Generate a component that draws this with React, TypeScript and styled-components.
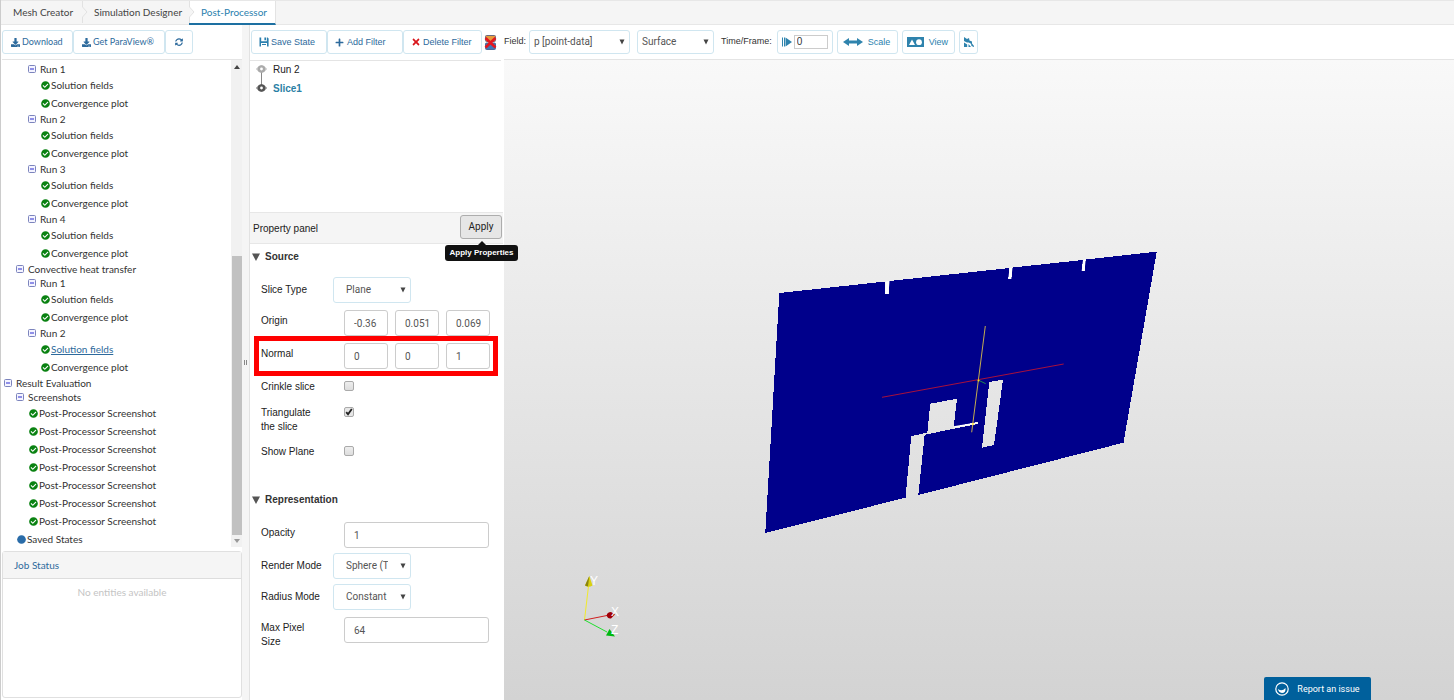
import React from "react";
import styled, { createGlobalStyle, css } from "styled-components";
import { FaCheckCircle, FaCircle, FaDownload, FaSyncAlt, FaTimes, FaPlus } from "react-icons/fa";

const sans = `"Liberation Sans", Arial, sans-serif`;
const lato = `Lato, "Open Sans", sans-serif`;
const roboto = `Roboto, Arial, sans-serif`;

const GlobalStyle = createGlobalStyle`
  * { box-sizing: border-box; }
  body { margin: 0; background: #f5f5f5; color: #333; font: 10px/14px ${sans}; }
  button, input, select { font: inherit; color: inherit; margin: 0; }
  ul { list-style: none; margin: 0; padding: 0; }
`;

const Page = styled.div`
  display: flex;
  flex-direction: column;
  height: 100vh;
  min-height: 700px;
  border-left: 1px solid #ccc;
  overflow: hidden;
`;

const Tabs = styled.nav`
  display: flex;
  flex: none;
  height: 25px;
  border-top: 1px solid #e7e7e7;
  border-bottom: 1px solid #e7e7e7;
  background: #f5f5f5;
  font: 10px/23px ${lato};
`;

const Tab = styled.a<{ $w: number; $active?: boolean }>`
  flex: none;
  width: ${(p) => p.$w}px;
  padding-left: 12px;
  color: #444;
  text-decoration: none;
  white-space: nowrap;
  ${(p) =>
    p.$active &&
    css`
      height: 24px;
      background: #fff;
      color: #2a7fae;
      border-bottom: 2px solid #1d70a2;
      border-right: 1px solid #e3e3e3;
    `}
`;

const Chevron = styled.svg`
  position: relative;
  z-index: 1;
  flex: none;
  width: 6px;
  height: 22px;
  margin-right: -6px;
`;

const Body = styled.div`
  display: flex;
  flex: 1;
  min-height: 0;
`;

const Sidebar = styled.aside`
  display: flex;
  flex-direction: column;
  flex: none;
  width: 241px;
  background: #fff;
  padding-left: 1px;
  font-family: ${lato};
`;

const SideTools = styled.div`
  display: flex;
  height: 35px;
  padding-top: 5px;
  border-bottom: 1px solid #e4e4e4;
`;

const Button = styled.button<{ $w: number; $accent?: string; $gap?: number; $pad?: number }>`
  display: flex;
  align-items: center;
  gap: ${(p) => p.$gap ?? 3}px;
  flex: none;
  width: ${(p) => p.$w}px;
  height: 24px;
  padding: 0 0 0 ${(p) => p.$pad ?? 7}px;
  border: 1px solid #d0e6f0;
  border-radius: 3px;
  background: #fff;
  color: ${(p) => p.$accent ?? "#2d6a9c"};
  font-size: 9px;
  white-space: nowrap;
`;

const TreeWrap = styled.div`
  display: flex;
  flex: none;
  height: 487px;
`;

const Tree = styled.ul`
  flex: 1;
  padding-top: 2px;
`;

const Node = styled.li<{ $level: number; $leaf?: boolean }>`
  display: flex;
  align-items: center;
  height: ${(p) => (p.$leaf ? 18 : 14)}px;
  padding-left: ${(p) => (p.$leaf ? 3 : 2) + p.$level * 12}px;
  gap: ${(p) => (p.$leaf ? 1 : 4)}px;
  color: #333;
  white-space: nowrap;
`;

const NodeLink = styled.a<{ $active?: boolean }>`
  color: ${(p) => (p.$active ? "#2d6a9c" : "#333")};
  text-decoration: ${(p) => (p.$active ? "underline" : "none")};
`;

const Toggle = styled.button`
  display: flex;
  width: 8px;
  height: 8px;
  padding: 0;
  border: 0;
  background: none;
`;

const Scroller = styled.div`
  display: flex;
  flex-direction: column;
  align-items: center;
  width: 11px;
  padding: 5px 0 4px;
  background: #f1f1f1;
`;

const Thumb = styled.div`
  width: 10px;
  height: 279px;
  margin: auto 0 4px;
  background: #c1c1c1;
`;

const JobPanel = styled.section`
  flex: 1;
  margin: 4px 0 2px;
  border: 1px solid #e0e0e0;
  border-radius: 3px;
  text-align: center;
  color: #c4c4c4;
`;

const JobTitle = styled.h2`
  margin: 0 0 6px;
  padding: 0 11px;
  height: 27px;
  border-bottom: 1px solid #ddd;
  background: #f5f5f5;
  color: #2d6a9c;
  font: 10px/26px ${lato};
  text-align: left;
`;

const Splitter = styled.div`
  display: flex;
  align-items: center;
  justify-content: center;
  flex: none;
  width: 8px;
  border-right: 1px solid #e2e2e2;
  background: #f5f5f5;
`;

const Grip = styled.div`
  width: 3px;
  height: 5px;
  border: solid #888;
  border-width: 0 1px;
`;

const Main = styled.main`
  display: flex;
  flex-direction: column;
  flex: 1;
  min-width: 0;
  background: #fff;
`;

const Toolbar = styled.div`
  display: flex;
  align-items: flex-start;
  flex: none;
  height: 34px;
  padding: 5px 0 0 1px;
`;

const ToolGroup = styled.div<{ $gap: number; $left: number }>`
  display: flex;
  align-items: center;
  height: 24px;
  gap: ${(p) => p.$gap}px;
  margin-left: ${(p) => p.$left}px;
`;

const ToolLabel = styled.label`
  height: 24px;
  font-size: 9px;
  line-height: 22px;
`;

const SelectBox = styled.span<{ $w: number; $tall?: boolean }>`
  position: relative;
  display: flex;
  flex: none;
  width: ${(p) => p.$w}px;
  height: ${(p) => (p.$tall ? 26 : 24)}px;

  select {
    width: 100%;
    appearance: none;
    border: 1px solid #d0e6f0;
    border-radius: 3px;
    background: #fff;
    padding: ${(p) => (p.$tall ? "0 22px 0 12px" : "0 16px 0 4px")};
    color: #555;
    font-family: ${roboto};
  }
  svg {
    position: absolute;
    right: 5px;
    top: calc(50% - 3px);
    pointer-events: none;
  }
`;

const FrameBox = styled.div`
  display: flex;
  align-items: center;
  gap: 2px;
  width: 56px;
  height: 24px;
  padding-left: 4px;
  border: 1px solid #d0e6f0;
  border-radius: 3px;

  input {
    width: 34px;
    height: 14px;
    padding: 0 2px;
    border: 1px solid #ccc;
  }
`;

const Content = styled.div`
  display: flex;
  flex: 1;
  min-height: 0;
`;

const Panel = styled.section`
  flex: none;
  width: 254px;
`;

const Pipeline = styled.ul`
  height: 152px;
  margin: 1px 3px 0 0;
  padding: 0 6px;
  border-top: 1px solid #e4e4e4;
  line-height: 17px;
  color: #222;

  li {
    display: flex;
    gap: 6px;
    height: 19px;
  }
  svg {
    margin-top: -1px;
  }
`;

const PipelineName = styled.span<{ $active?: boolean }>`
  ${(p) => p.$active && `color: #2a7fa5; font-weight: 700;`}
`;

const PanelHead = styled.header`
  display: flex;
  justify-content: space-between;
  height: 32px;
  margin-right: 1px;
  padding: 2px 1px 0 3px;
  border: solid #e7e7e7;
  border-width: 1px 0;
  background: #f5f5f5;
  line-height: 28px;
  color: #222;
`;

const ApplyWrap = styled.div`
  position: relative;
  line-height: 14px;
`;

const ApplyButton = styled.button`
  width: 42px;
  height: 24px;
  padding: 0;
  border: 1px solid #adadad;
  border-radius: 3px;
  background: #e6e6e6;
  font-family: ${roboto};
`;

const Tooltip = styled.div`
  position: absolute;
  z-index: 2;
  top: 30px;
  right: -16px;
  width: 73px;
  border-radius: 3px;
  background: #111;
  color: #fff;
  font: 700 8px/16px ${sans};
  text-align: center;
  white-space: nowrap;

  &::before {
    content: "";
    position: absolute;
    top: -4px;
    left: 33px;
    border: solid transparent;
    border-width: 0 4px 4px;
    border-bottom-color: #111;
  }
`;

const SectionTitle = styled.h3<{ $after: number }>`
  display: flex;
  align-items: center;
  gap: 5px;
  height: 26px;
  margin: 0 0 ${(p) => p.$after}px 2px;
  color: #333;
  font: 700 10px/14px ${sans};
`;

const Row = styled.div<{ $h: number; $select?: boolean }>`
  position: relative;
  display: flex;
  height: ${(p) => p.$h}px;
  padding-left: 11px;

  > label {
    width: ${(p) => (p.$select ? 72 : 83)}px;
    padding: ${(p) => (p.$select ? "6px 0 0" : "4px 20px 0 0")};
    color: #222;
  }
`;

const Field = styled.input<{ $wide?: boolean }>`
  width: ${(p) => (p.$wide ? 145 : 44)}px;
  height: 26px;
  padding: 0 8px 0 9px;
  border: 1px solid #ccc;
  border-radius: 3px;
  background: #fff;
  font-family: ${roboto};
  && {
    margin-right: 7px;
    color: #555;
  }
`;

const Check = styled.input`
  appearance: none;
  width: 10px;
  height: 10px;
  && { margin-top: 5px; }
  border: 1px solid #aaa;
  border-radius: 2px;
  background: linear-gradient(#eee, #ddd);

  &:checked {
    background: url("data:image/svg+xml,%3Csvg xmlns='http://www.w3.org/2000/svg' viewBox='0 0 8 8'%3E%3Cpath d='M1.2 4.2 3 6.2 6.8 1' fill='none' stroke='%23222' stroke-width='1.8'/%3E%3C/svg%3E") #e6e6e6;
  }
`;

const Highlight = styled.div`
  position: absolute;
  top: -7px;
  left: 4px;
  width: 244px;
  height: 40px;
  border: 5px solid #f00;
  pointer-events: none;
`;

const Viewport = styled.section`
  position: relative;
  flex: 1;
  min-width: 0;
  border-top: 1px solid #e4e4e4;
  background: linear-gradient(#f9f9f9, #d3d3d3);

  > svg {
    display: block;
    width: 100%;
    height: 100%;
  }
`;

const Report = styled.button`
  position: absolute;
  right: 83px;
  bottom: 0;
  display: flex;
  align-items: center;
  justify-content: center;
  gap: 8px;
  width: 107px;
  height: 23px;
  padding: 0;
  border: 0;
  border-radius: 2px 2px 0 0;
  background: #00609c;
  font-family: ${roboto};
  font-size: 9px;
  && { color: #fff; }
`;

const Minus = () => (
  <svg width="8" height="8" viewBox="0 0 8 8">
    <rect x="0.5" y="0.5" width="7" height="7" rx="1" fill="#f4f4ff" stroke="#7c84bd" />
    <path d="M2 4h4" stroke="#2a2ad0" />
  </svg>
);

const Caret = () => (
  <svg width="6" height="6" viewBox="0 0 6 6">
    <path d="M0.5 0.5h5L3 5.5z" fill="#444" />
  </svg>
);

const Disk = () => (
  <svg width="10" height="10" viewBox="0 0 10 10">
    <path fill="#2a7fae" d="M0.5 0.5h1.700v3.700h5.600V0.500h0.800l1 1v8H8V6H2v3.500H0.500zM5.400 0.500H7v2.700H5.400zM3 7h4v1H3z" />
  </svg>
);

const FilterOff = () => (
  <svg width="13" height="15" viewBox="0 0 13 15">
    <rect x="1.5" y="0.5" width="10" height="6" rx="1" fill="#e69a3d" stroke="#6a6a80" />
    <rect x="1.5" y="8" width="10" height="6.5" rx="1" fill="#3f79b8" stroke="#4a6a98" />
    <path d="M1.500 3l10 9.500M11.500 3l-10 9.500" stroke="#e3171f" strokeWidth="2.6" />
  </svg>
);

const Eye = ({ color, line }: { color: string; line: "up" | "down" }) => (
  <svg width="11" height="19" viewBox="0 0 11 19">
    <path d={line === "down" ? "M5.500 12v7" : "M5.500 0v6"} stroke="#888" />
    <path d="M0.500 9Q5.500 3 10.500 9Q5.500 15 0.500 9z" fill="none" stroke={color} />
    <circle cx="5.5" cy="9" r="2.6" fill="none" stroke={color} strokeWidth="2.4" />
  </svg>
);

const Play = () => (
  <svg width="10" height="10" viewBox="0 0 10 10">
    <path fill="#2f83ad" d="M0 0.500h1v9H0zM2 0.500h1v9H2zM3.500 0.500 10 5l-6.500 4.500z" />
  </svg>
);

const ScaleIcon = () => (
  <svg width="20" height="8" viewBox="0 0 20 8">
    <path fill="#2f83ad" d="M0 4 6 0v2.500h8V0l6 4-6 4V5.500H6V8z" />
  </svg>
);

const ViewIcon = () => (
  <svg width="17" height="10" viewBox="0 0 17 10">
    <rect width="17" height="10" fill="#2f83ad" />
    <path d="M2 8 5 2.500 8 8z" fill="#fff" />
    <circle cx="12" cy="5.2" r="2.9" fill="#fff" />
  </svg>
);

const StairsIcon = () => (
  <svg width="10" height="10" viewBox="0 0 10 10">
    <path fill="#2f83ad" d="M0 0 3 2 5 1 5.500 3.500 8 4.500 8 6.500 10 9 10 10 7.500 9 7 6.800 4.800 5.500 3 5.500 0 4zM0 5.500 3.200 7.500V10H0zM4.500 7 7 10H4.500z" />
  </svg>
);

const Triangle = () => (
  <svg width="8" height="8" viewBox="0 0 8 8">
    <path d="M0 0.500h8L4 8z" fill="#555" />
  </svg>
);

const TabArrow = () => (
  <Chevron viewBox="0 0 6 22">
    <path d="M0 5.500 5 11 0 16.500z" fill="#f5f5f5" />
    <path d="M0.500 0v6l4.500 5-4.500 5v6" fill="none" stroke="#e2e2e2" />
  </Chevron>
);

type Item = { text: string; level: number; leaf?: boolean; active?: boolean; dot?: boolean };

const run = (n: number, active = false): Item[] => [
  { text: `Run ${n}`, level: 2 },
  { text: "Solution fields", level: 3, leaf: true, active },
  { text: "Convergence plot", level: 3, leaf: true },
];

const items: Item[] = [
  ...run(1),
  ...run(2),
  ...run(3),
  ...run(4),
  { text: "Convective heat transfer", level: 1 },
  ...run(1),
  ...run(2, true),
  { text: "Result Evaluation", level: 0 },
  { text: "Screenshots", level: 1 },
  ...Array.from({ length: 7 }, () => ({ text: "Post-Processor Screenshot", level: 2, leaf: true })),
  { text: "Saved States", level: 1, leaf: true, dot: true },
];

function TreeItem({ item }: { item: Item }) {
  return (
    <Node $level={item.level} $leaf={item.leaf}>
      {!item.leaf && (
        <Toggle aria-label={`Collapse ${item.text}`}>
          <Minus />
        </Toggle>
      )}
      {item.leaf && (item.dot ? <FaCircle size={9} color="#2a6ca8" /> : <FaCheckCircle size={9} color="#0a8212" />)}
      {item.leaf ? (
        <NodeLink href="#" $active={item.active}>
          {item.text}
        </NodeLink>
      ) : (
        item.text
      )}
    </Node>
  );
}

function Select({ id, value, w, tall, label }: { id: string; value: string; w: number; tall?: boolean; label?: string }) {
  return (
    <SelectBox $w={w} $tall={tall}>
      <select id={id} aria-label={label}>
        <option>{value}</option>
      </select>
      <Caret />
    </SelectBox>
  );
}

function Vector({ label, values }: { label: string; values: string[] }) {
  return (
    <>
      <label htmlFor={`${label}-0`}>{label}</label>
      {values.map((v, i) => (
        <Field key={i} id={`${label}-${i}`} aria-label={`${label} ${"XYZ"[i]}`} defaultValue={v} />
      ))}
    </>
  );
}

const Scene = () => (
  <svg viewBox="504 60 950 640" preserveAspectRatio="xMidYMid meet" role="img" aria-label="Slice through the model">
    <path
      shapeRendering="crispEdges"
      fill="#00008b"
      fillRule="evenodd"
      d="M779.300 293 885.500 281.500 885 294H888.500L889.500 281 1009.500 268 1008.300 279H1011.300L1012.500 267.500 1083 260 1081.700 271H1084.500L1085.700 259.500 1156.700 251.700 1123.500 442.700 918.300 495 924.700 434.700 977.700 424V422L953.700 426.700 957 398.700 930.300 403.700 927.300 432.700 911.300 436 905.500 497.700 765.300 533zM989.300 382 1003 379.700 994 445 982 447.700z"
    />
    <path d="M885.500 281.500 885 294H888.500L889.500 281zM1009.500 268 1008.300 279H1011.300L1012.500 267.500zM1083 260 1081.700 271H1084.500L1085.700 259.500z" fill="#fff" />
    <path d="M953.700 427 977.700 423" stroke="#fff" strokeWidth="1.5" />
    <path d="M882 397.300 1063.700 364" stroke="#a8103c" />
    <path d="M985.300 326 971.700 432.300" stroke="#c4ac50" />
    <path d="M978.700 380.300 985.700 383.700" stroke="#1f8a50" />
    <circle cx="978.5" cy="380.5" r="1" fill="#ffd820" />
    <circle cx="973" cy="424" r="1.2" fill="#ffe860" />
    <path d="M584.500 620 588.500 586" stroke="#f1ea2c" />
    <path d="M584.500 620 607 615.500" stroke="#d02020" />
    <path d="M584.500 620 607 632" stroke="#20e030" />
    <path d="M589.300 576 592.500 585.500Q588.500 588 585 585.500z" fill="#d8d010" />
    <path d="M589.300 576 588 586.500 585 585.500z" fill="#8a8410" />
    <path d="M606.700 615.500Q607 612 611 612L615 614.500 611 618.500Q607.500 619 606.700 615.500z" fill="#a00008" />
    <path d="M609.500 629 615 636.500 606 635.500z" fill="#00b810" />
    <g fill="#fff" fontFamily="Liberation Sans, Arial, sans-serif" fontSize="12">
      <text x="590" y="585">Y</text>
      <text x="611" y="616">X</text>
      <text x="611" y="634">Z</text>
    </g>
  </svg>
);

export default function App() {
  return (
    <>
      <GlobalStyle />
      <Page>
        <Tabs>
          <Tab href="#" $w={81}>Mesh Creator</Tab>
          <TabArrow />
          <Tab href="#" $w={107}>Simulation Designer</Tab>
          <TabArrow />
          <Tab href="#" $w={87} $active>Post-Processor</Tab>
        </Tabs>
        <Body>
          <Sidebar>
            <SideTools>
              <Button $w={71} $pad={8} $gap={2}><FaDownload size={9} />Download</Button>
              <Button $w={92} $pad={8} $gap={2}><FaDownload size={9} />Get ParaView®</Button>
              <Button $w={28} $pad={9} aria-label="Refresh"><FaSyncAlt size={8} /></Button>
            </SideTools>
            <TreeWrap>
              <Tree>
                {items.map((item, i) => (
                  <TreeItem key={i} item={item} />
                ))}
              </Tree>
              <Scroller>
                <svg width="6" height="4" viewBox="0 0 6 4"><path d="M0 4 3 0l3 4z" fill="#444" /></svg>
                <Thumb />
                <svg width="6" height="4" viewBox="0 0 6 4"><path d="M0 0h6L3 4z" fill="#999" /></svg>
              </Scroller>
            </TreeWrap>
            <JobPanel>
              <JobTitle>Job Status</JobTitle>
              No entities available
            </JobPanel>
          </Sidebar>
          <Splitter><Grip /></Splitter>
          <Main>
            <Toolbar>
              <Button $w={76} $gap={2}><Disk />Save State</Button>
              <Button $w={76}><FaPlus size={9} />Add Filter</Button>
              <Button $w={79} $gap={2}><FaTimes size={10} color="#d9161c" />Delete Filter</Button>
              <ToolGroup $left={2} $gap={7}>
                <FilterOff />
                <ToolLabel htmlFor="field">Field:</ToolLabel>
              </ToolGroup>
              <ToolGroup $left={3} $gap={7}>
                <Select id="field" value="p [point-data]" w={101} />
                <Select id="repr" label="Representation style" value="Surface" w={77} />
                <ToolLabel htmlFor="frame">Time/Frame:</ToolLabel>
              </ToolGroup>
              <ToolGroup $left={5} $gap={4}>
                <FrameBox>
                  <Play />
                  <input id="frame" defaultValue="0" />
                </FrameBox>
                <Button $w={61} $gap={5} $pad={5} $accent="#2a7fae"><ScaleIcon />Scale</Button>
                <Button $w={53} $gap={5} $pad={4} $accent="#2a7fae"><ViewIcon />View</Button>
                <Button $w={19} $pad={4} aria-label="Resize"><StairsIcon /></Button>
              </ToolGroup>
            </Toolbar>
            <Content>
              <Panel>
                <Pipeline>
                  <li><Eye color="#aaa" line="down" /><PipelineName>Run 2</PipelineName></li>
                  <li><Eye color="#555" line="up" /><PipelineName $active>Slice1</PipelineName></li>
                </Pipeline>
                <PanelHead>
                  Property panel
                  <ApplyWrap>
                    <ApplyButton>Apply</ApplyButton>
                    <Tooltip role="tooltip">Apply Properties</Tooltip>
                  </ApplyWrap>
                </PanelHead>
                <SectionTitle $after={7}><Triangle />Source</SectionTitle>
                <Row $h={33} $select>
                  <label htmlFor="slice">Slice Type</label>
                  <Select id="slice" value="Plane" w={78} tall />
                </Row>
                <Row $h={33}><Vector label="Origin" values={["-0.36", "0.051", "0.069"]} /></Row>
                <Row $h={33}>
                  <Vector label="Normal" values={["0", "0", "1"]} />
                  <Highlight />
                </Row>
                <Row $h={26}><label htmlFor="crinkle">Crinkle slice</label><Check type="checkbox" id="crinkle" /></Row>
                <Row $h={39}><label htmlFor="tri">Triangulate the slice</label><Check type="checkbox" id="tri" defaultChecked /></Row>
                <Row $h={46}><label htmlFor="plane">Show Plane</label><Check type="checkbox" id="plane" /></Row>
                <SectionTitle $after={9}><Triangle />Representation</SectionTitle>
                <Row $h={31}><label htmlFor="opacity">Opacity</label><Field $wide id="opacity" defaultValue="1" /></Row>
                <Row $h={31} $select>
                  <label htmlFor="render">Render Mode</label>
                  <Select id="render" value="Sphere (Texture)" w={78} tall />
                </Row>
                <Row $h={33} $select>
                  <label htmlFor="radius">Radius Mode</label>
                  <Select id="radius" value="Constant" w={78} tall />
                </Row>
                <Row $h={33}><label htmlFor="max">Max Pixel Size</label><Field $wide id="max" defaultValue="64" /></Row>
              </Panel>
              <Viewport>
                <Scene />
                <Report>
                  <svg width="14" height="14" viewBox="0 0 14 14">
                    <circle cx="7" cy="7" r="6.2" fill="none" stroke="#fff" strokeWidth="1.2" />
                    <path d="M3 7q4 3 7.500-1Q11 11 7 11 3.500 10.500 3 7z" fill="#fff" />
                  </svg>
                  Report an issue
                </Report>
              </Viewport>
            </Content>
          </Main>
        </Body>
      </Page>
    </>
  );
}
